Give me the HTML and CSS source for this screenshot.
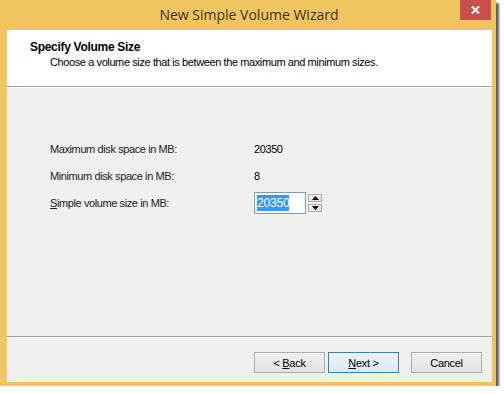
FILE: index.html
```html
<!DOCTYPE html>
<html lang="en">
  <head>
    <meta charset="UTF-8" />
    <title>New Simple Volume Wizard</title>
    <link rel="stylesheet" href="styles.css">
  </head>
  <body>
    <div class="window">
      <div class="titlebar">
        <span></span>
        <div class="title">New Simple Volume Wizard</div>
        <button class="close" aria-label="Close">
          <svg width="9" height="8" viewBox="0 0 9 8">
            <path d="M1 0.5 L8 7.5 M8 0.5 L1 7.5" stroke="#fff" stroke-width="2" />
          </svg>
        </button>
      </div>

      <div class="client">
        <div class="header">
          <h1>Specify Volume Size</h1>
          <p>Choose a volume size that is between the maximum and minimum sizes.</p>
        </div>

        <div class="content">
          <div class="row">
            <span class="label">Maximum disk space in MB:</span>
            <span class="value">20350</span>
          </div>
          <div class="row">
            <span class="label">Minimum disk space in MB:</span>
            <span class="value">8</span>
          </div>
          <div class="row size-row">
            <span class="label"><u>S</u>imple volume size in MB:</span>
            <div class="spin">
              <div class="spin-input"><span class="selected">20350</span></div>
              <div class="spin-buttons">
                <div class="spin-btn">
                  <svg width="7" height="4" viewBox="0 0 7 4"><path d="M0 4 L3.5 0 L7 4 Z" fill="#000" /></svg>
                </div>
                <div class="spin-btn">
                  <svg width="7" height="4" viewBox="0 0 7 4"><path d="M0 0 L3.5 4 L7 0 Z" fill="#000" /></svg>
                </div>
              </div>
            </div>
          </div>
        </div>

        <div class="footer">
          <button class="btn">&lt; <u>B</u>ack</button>
          <button class="btn default"><u>N</u>ext &gt;</button>
          <button class="btn cancel">Cancel</button>
        </div>
      </div>
    </div>
  </body>
</html>
```

FILE: styles.css
```css
body {
  margin: 0;
  background: #fff;
  font-family: "Liberation Sans", Arial, sans-serif;
  font-size: 11px;
  letter-spacing: -0.4px;
  color: #000;
}
.window {
  width: 496px;
  height: 386px;
  box-sizing: border-box;
  padding: 0 4px 4px 7px;
  background: #efc55f;
  box-shadow: 3px 3px 2px rgba(40, 40, 40, 0.75);
  display: flex;
  flex-direction: column;
}
.titlebar {
  height: 30px;
  display: grid;
  grid-template-columns: 1fr auto 1fr;
  align-items: start;
  margin-right: -1px;
}
.title {
  font-family: "Open Sans", "Noto Sans", sans-serif;
  font-size: 14px;
  letter-spacing: 0;
  color: #3a3226;
  line-height: 30px;
  margin-left: -2px;
}
.close {
  justify-self: end;
  width: 31px;
  height: 20px;
  margin-right: 2px;
  border: none;
  padding: 0;
  background: #c9504b;
  display: flex;
  align-items: center;
  justify-content: center;
}
.client {
  flex: 1;
  background: #f0f0f0;
  display: flex;
  flex-direction: column;
}
.header {
  height: 57px;
  box-sizing: border-box;
  background: #fff;
  border-bottom: 1px solid #a0a0a0;
  padding: 10px 0 0 23px;
}
.header h1 {
  margin: 0;
  font-size: 12px;
  font-weight: bold;
  letter-spacing: -0.3px;
  line-height: 15px;
}
.header p {
  margin: 0 0 0 20px;
  line-height: 15px;
}
.content {
  flex: 1;
  padding: 54px 0 0 43px;
  border-top: 1px solid #fff;
}
.row {
  display: flex;
  align-items: center;
  height: 13px;
  margin-bottom: 14px;
}
.label {
  width: 203px;
  color: #1a1a1a;
}
.value {
  padding-left: 1px;
}
.size-row {
  margin-top: 2px;
}
.spin {
  display: flex;
  align-items: center;
  gap: 2px;
  margin-left: 1px;
}
.spin-input {
  width: 52px;
  height: 22px;
  box-sizing: border-box;
  border: 1px solid #7a9cc4;
  background: #fff;
  padding: 3px 0 0 2px;
}
.selected {
  background: #3399ff;
  color: #fff;
  padding: 1px 0;
  font-size: 12px;
  letter-spacing: -0.2px;
}
.spin-buttons {
  display: flex;
  flex-direction: column;
  gap: 2px;
}
.spin-btn {
  width: 14px;
  height: 8px;
  box-sizing: border-box;
  border: 1px solid #acacac;
  background: linear-gradient(#f2f2f2, #e2e2e2);
  display: flex;
  align-items: center;
  justify-content: center;
}
.footer {
  height: 46px;
  box-sizing: border-box;
  border-top: 1px solid #a0a0a0;
  box-shadow: inset 0 1px 0 #fff;
  display: flex;
  align-items: flex-start;
  padding: 15px 0 0 247px;
  gap: 3px;
}
.btn {
  width: 71px;
  height: 21px;
  border: 1px solid #adadad;
  background: linear-gradient(#f0f0f0, #e3e3e3);
  font-family: inherit;
  font-size: 11px;
  letter-spacing: -0.3px;
  color: #000;
  padding: 0;
}
.btn.default {
  border-color: #3c7fb1;
  background: linear-gradient(#eaf3fb, #dcebf8);
}
.btn.cancel {
  margin-left: 9px;
}
```
